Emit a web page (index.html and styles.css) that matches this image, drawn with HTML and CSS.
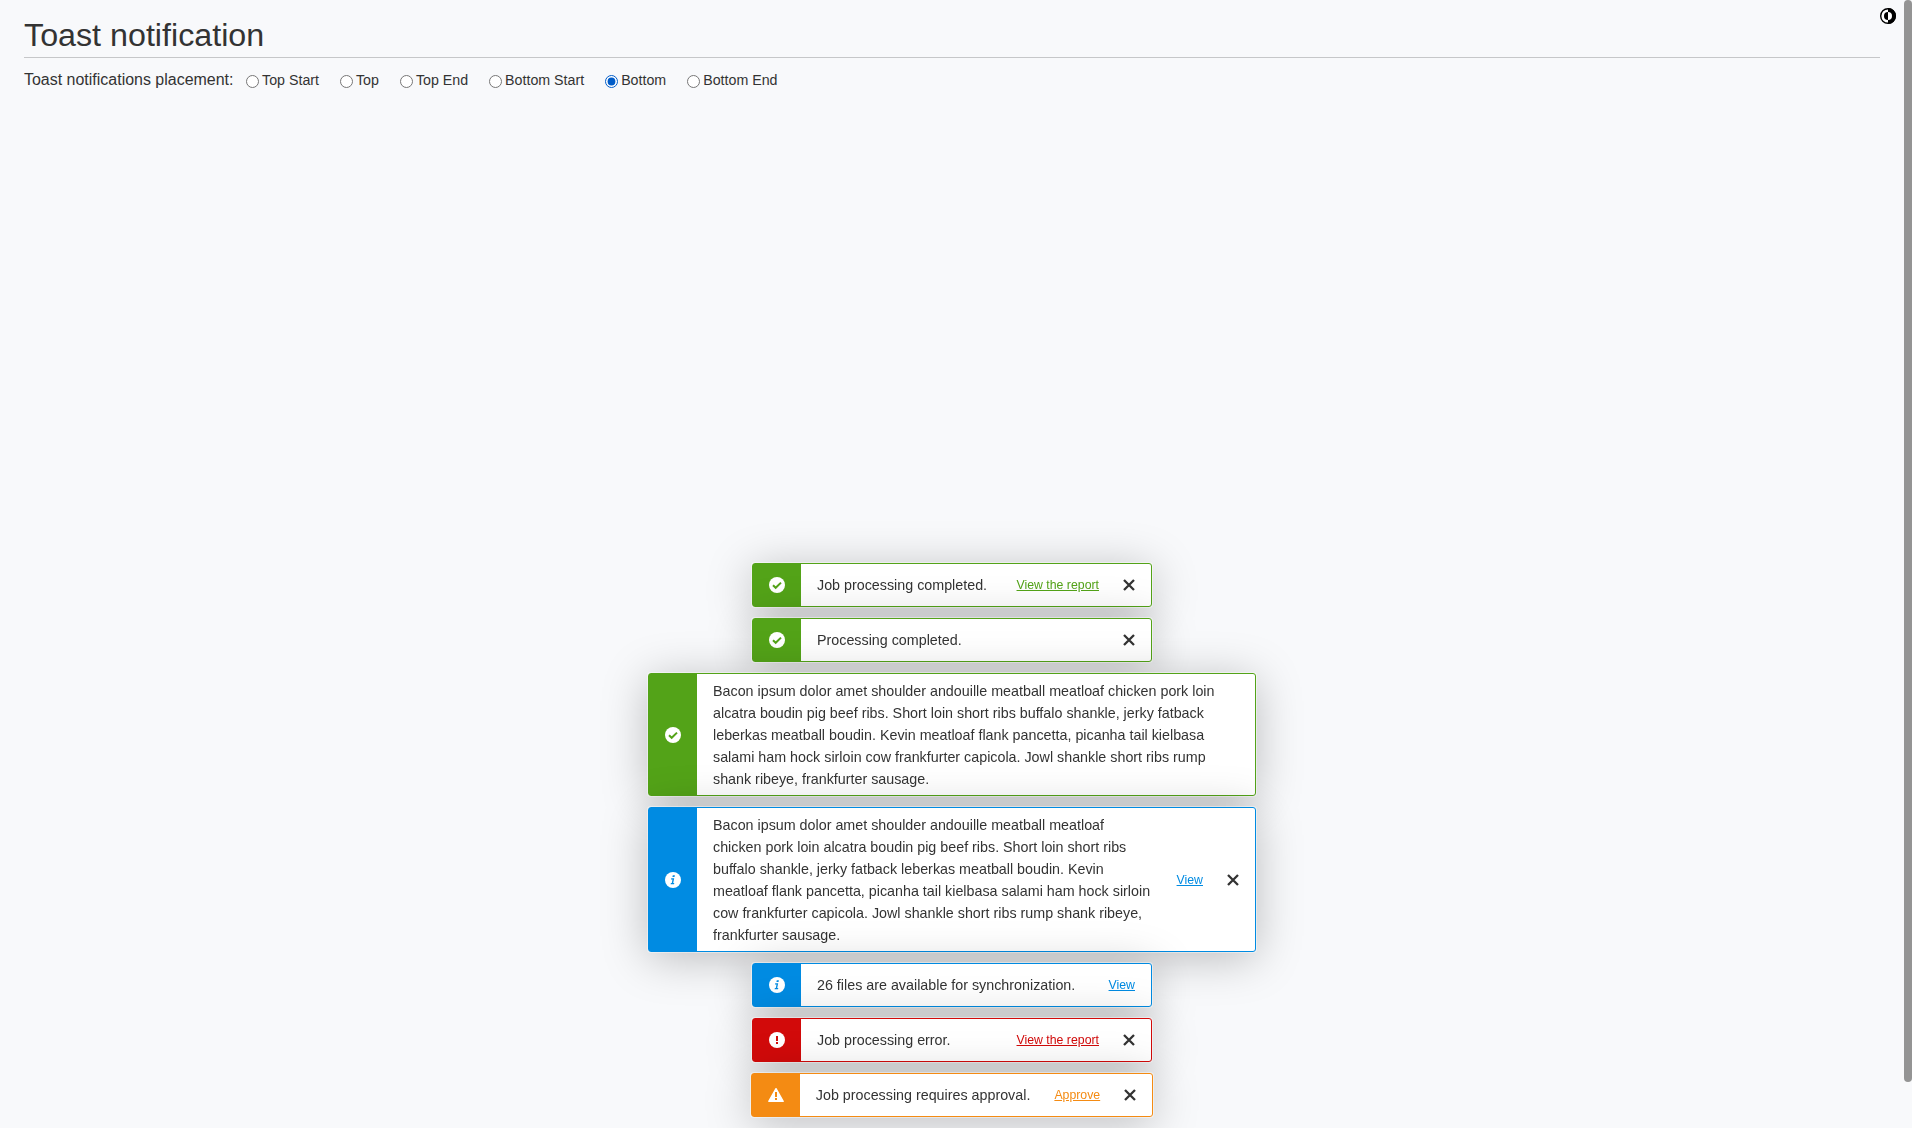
FILE: index.html
```html
<!DOCTYPE html>
<html lang="en">
<head>
<meta charset="utf-8">
<title>Toast notification</title>
<link rel="stylesheet" href="styles.css">
</head>
<body>
<svg class="symbols" aria-hidden="true">
  <symbol id="ok" viewBox="0 0 16 16"><circle cx="8" cy="8" r="8" fill="#fff"/><path d="M4 8.2l2.7 2.6L12 5.6" fill="none" stroke="currentColor" stroke-width="2"/></symbol>
  <symbol id="info" viewBox="0 0 16 16"><circle cx="8" cy="8" r="8" fill="#fff"/><path d="M7.8 3.2h2.1l-.4 1.9H7.4zM6.2 6.3h3l-1 4.7h1.1l-.3 1.2H5.6l.3-1.2h.9l.7-3.5H6z" fill="currentColor"/></symbol>
  <symbol id="error" viewBox="0 0 16 16"><circle cx="8" cy="8" r="8" fill="#fff"/><path d="M7 4h2v5H7zM7 10h2v2H7z" fill="currentColor"/></symbol>
  <symbol id="warning" viewBox="0 0 16 16"><path d="M8 1.7L15.2 14.3H.8z" fill="#fff" stroke="#fff" stroke-width="1.4" stroke-linejoin="round"/><path d="M7 5h2v5H7zM7 11h2v2H7z" fill="currentColor"/></symbol>
  <symbol id="close" viewBox="0 0 12 12"><path d="M1 1l10 10M11 1L1 11" fill="none" stroke="currentColor" stroke-width="2.3"/></symbol>
</svg>
<main class="page">
  <h1 class="title">Toast notification</h1>
  <div class="placement">
    <span class="placement-label">Toast notifications placement:</span>
    <label class="option"><input type="radio" name="placement">Top Start</label>
    <label class="option"><input type="radio" name="placement">Top</label>
    <label class="option"><input type="radio" name="placement">Top End</label>
    <label class="option"><input type="radio" name="placement">Bottom Start</label>
    <label class="option"><input type="radio" name="placement" checked>Bottom</label>
    <label class="option"><input type="radio" name="placement">Bottom End</label>
  </div>
</main>
<button class="theme" aria-label="Theme"><svg width="16" height="16" viewBox="0 0 16 16"><circle cx="8" cy="8" r="7.3" fill="#fff" stroke="#000" stroke-width="1.4"/><path d="M8 0a8 8 0 0 1 0 16v-4a4 4 0 0 0 0-8z"/><path d="M8 4a4 4 0 0 0 0 8z"/></svg></button>
<div class="scrollbar"></div>
<section class="toasts">
  <div class="toast success"><div class="badge"><svg><use href="#ok"/></svg></div><p class="text">Job processing completed.</p><a class="link">View the report</a><svg class="close"><use href="#close"/></svg></div>
  <div class="toast success"><div class="badge"><svg><use href="#ok"/></svg></div><p class="text">Processing completed.</p><svg class="close"><use href="#close"/></svg></div>
  <div class="toast success"><div class="badge"><svg><use href="#ok"/></svg></div><p class="text">Bacon ipsum dolor amet shoulder andouille meatball meatloaf chicken pork loin alcatra boudin pig beef ribs. Short loin short ribs buffalo shankle, jerky fatback leberkas meatball boudin. Kevin meatloaf flank pancetta, picanha tail kielbasa salami ham hock sirloin cow frankfurter capicola. Jowl shankle short ribs rump shank ribeye, frankfurter sausage.</p></div>
  <div class="toast info"><div class="badge"><svg><use href="#info"/></svg></div><p class="text">Bacon ipsum dolor amet shoulder andouille meatball meatloaf chicken pork loin alcatra boudin pig beef ribs. Short loin short ribs buffalo shankle, jerky fatback leberkas meatball boudin. Kevin meatloaf flank pancetta, picanha tail kielbasa salami ham hock sirloin cow frankfurter capicola. Jowl shankle short ribs rump shank ribeye, frankfurter sausage.</p><a class="link">View</a><svg class="close"><use href="#close"/></svg></div>
  <div class="toast info"><div class="badge"><svg><use href="#info"/></svg></div><p class="text">26 files are available for synchronization.</p><a class="link">View</a></div>
  <div class="toast error"><div class="badge"><svg><use href="#error"/></svg></div><p class="text">Job processing error.</p><a class="link">View the report</a><svg class="close"><use href="#close"/></svg></div>
  <div class="toast warning"><div class="badge"><svg><use href="#warning"/></svg></div><p class="text">Job processing requires approval.</p><a class="link">Approve</a><svg class="close"><use href="#close"/></svg></div>
</section>
</body>
</html>
```
FILE: styles.css
```css
* { box-sizing: border-box; }
html, body { height: 100%; overflow: hidden; }
body {
  margin: 0;
  background: #f8f9fb;
  color: #333;
  font-family: "Liberation Sans", Arial, sans-serif;
}
.symbols { position: absolute; width: 0; height: 0; }
.page { padding: 13px 32px 0 24px; }
.title {
  margin: 0;
  height: 45px;
  border-bottom: 1px solid #c6c7c9;
  font-size: 32.25px;
  font-weight: 400;
  line-height: 44px;
}
.placement { display: flex; align-items: center; margin-top: 11px; height: 22px; font-size: 14.22px; }
.placement-label { margin-right: 12.6px; font-size: 15.97px; }
.option { display: flex; align-items: center; margin-right: 21px; }
.option input { margin: 3px 3px 0 0; width: 13px; height: 13px; accent-color: #005cc8; }
.theme { position: absolute; top: 8px; right: 16px; padding: 0; border: 0; background: none; line-height: 0; }
.scrollbar { position: absolute; top: 0; right: 0; width: 8px; height: 1082px; border-radius: 4px; background: #949494; }
.toasts {
  position: fixed;
  right: 8px;
  bottom: 11px;
  left: 0;
  display: flex;
  flex-direction: column;
  align-items: center;
  gap: 11px;
}
.toast {
  position: relative;
  display: flex;
  align-items: center;
  flex: none;
  min-width: 400px;
  max-width: 608px;
  min-height: 44px;
  padding-right: 16px;
  border: 1px solid var(--tone);
  border-radius: 3px;
  background: #fff;
  box-shadow: 0 0 0 1px rgba(255, 255, 255, .4), 0 6px 46px rgba(0, 0, 0, .25);
}
.success { --tone: #53a318; }
.info { --tone: #008be2; }
.error { --tone: #d20a0a; }
.warning { --tone: #f48b13; }
.badge {
  display: flex;
  align-self: stretch;
  align-items: center;
  justify-content: center;
  flex: none;
  width: 48px;
  background: var(--tone);
  color: var(--tone);
}
.badge svg { width: 16px; height: 16px; }
.text { flex: 1; margin: 0; padding: 5.5px 0 5.5px 16px; font-size: 14.31px; line-height: 22px; }
.link { flex: none; margin-left: 24px; color: var(--tone); font-size: 12.3px; line-height: 16px; text-decoration: underline; }
.close { flex: none; width: 12px; height: 12px; margin-left: 24px; color: #333; }
```
